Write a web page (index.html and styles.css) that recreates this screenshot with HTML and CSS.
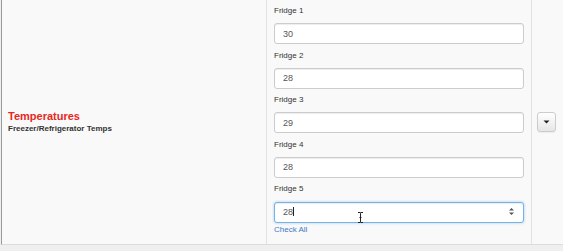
FILE: index.html
```html
<!DOCTYPE html>
<html lang="en">
<head>
  <meta charset="UTF-8">
  <meta name="viewport" content="width=device-width, initial-scale=1.0">
  <title>Temperatures</title>
  <link rel="stylesheet" href="styles.css">
</head>
<body>

<div class="panel">
    <div class="title-col">
        <div>
            <h2 class="title">Temperatures</h2>
            <div class="subtitle">Freezer/Refrigerator Temps</div>
        </div>
    </div>

    <div class="fields-col">
        <label for="fridge1">Fridge 1</label>
        <input type="text" id="fridge1" value="30">

        <label for="fridge2">Fridge 2</label>
        <input type="text" id="fridge2" value="28">

        <label for="fridge3">Fridge 3</label>
        <input type="text" id="fridge3" value="29">

        <label for="fridge4">Fridge 4</label>
        <input type="text" id="fridge4" value="28">

        <label for="fridge5">Fridge 5</label>
        <div class="input-wrap">
            <input type="text" id="fridge5" class="focused" value="28">
            <span class="caret-line"></span>
            <svg class="spinner" width="7" height="9" viewBox="0 0 7 9">
                <path d="M3.5 1 L6 3.6 L1 3.6 Z M3.5 8 L6 5.4 L1 5.4 Z" fill="#555"/>
            </svg>
            <svg class="ibeam" width="7" height="11" viewBox="0 0 7 11">
                <path d="M1 0.5 H3 Q3.5 0.5 3.5 1.5 V9.5 Q3.5 10.5 3 10.5 H1 M6 0.5 H4 Q3.5 0.5 3.5 1.5 M3.5 9.5 Q3.5 10.5 4 10.5 H6 M2.5 5.5 H4.5" stroke="#222" stroke-width="1" fill="none"/>
            </svg>
        </div>
        <a href="#" class="check-all">Check All</a>
    </div>

    <div class="action-col">
        <button type="button" class="menu-btn">
            <svg width="7" height="4" viewBox="0 0 7 4"><path d="M0.5 0.5 H6.5 L3.5 3.5 Z" fill="#222"/></svg>
        </button>
    </div>
</div>

</body>
</html>
```

FILE: styles.css
```css
/* Panel row with three columns */
body {
  margin: 0;
  padding: 0;
  background-color: #efefef;
  font-family: "Liberation Sans", Arial, sans-serif;
  color: #333;
}

.panel {
  display: flex;
  height: 244px;
  margin-left: 1px;
  border-left: 1px solid #9a9a9a;
  border-bottom: 1px solid #dcdcdc;
  background-color: #f9f9f9;
}

.title-col {
  width: 258px;
  padding-left: 6px;
  display: flex;
  align-items: center;
  border-right: 1px solid #e2e2e2;
}

.title {
  margin: 0;
  font-size: 11px;
  line-height: 14px;
  font-weight: bold;
  color: #e8271d;
}

.subtitle {
  font-size: 8px;
  line-height: 12px;
  font-weight: bold;
  color: #333;
}

.fields-col {
  width: 250px;
  padding: 5px 7px 0 7px;
  display: flex;
  flex-direction: column;
  border-right: 1px solid #e2e2e2;
}

label {
  font-size: 8px;
  line-height: 12px;
  color: #333;
  margin-bottom: 6px;
}

input {
  box-sizing: border-box;
  width: 250px;
  height: 21px;
  margin: 0 0 5.5px 0;
  padding: 0 8px;
  font-family: "Liberation Sans", Arial, sans-serif;
  font-size: 9px;
  color: #555;
  background: #fff;
  border: 1px solid #ccc;
  border-radius: 3px;
  box-shadow: inset 0 1px 1px rgba(0, 0, 0, 0.075);
  outline: none;
}

.input-wrap {
  position: relative;
  height: 21px;
}

input.focused {
  margin: 0;
  border-color: #78b1e6;
  box-shadow: inset 0 1px 1px rgba(0, 0, 0, 0.075), 0 0 3px rgba(102, 175, 233, 0.6);
}

.caret-line {
  position: absolute;
  left: 19px;
  top: 6px;
  width: 1px;
  height: 9px;
  background: #222;
}

.spinner {
  position: absolute;
  right: 9px;
  top: 6px;
}

.ibeam {
  position: absolute;
  left: 83px;
  top: 11px;
}

.check-all {
  margin-top: 2px;
  font-size: 8px;
  line-height: 12px;
  color: #3a7bc8;
  text-decoration: none;
}

.action-col {
  flex: 1;
  display: flex;
  align-items: center;
  padding-left: 5px;
}

.menu-btn {
  width: 19px;
  height: 20px;
  padding: 0;
  display: flex;
  align-items: center;
  justify-content: center;
  border: 1px solid #ccc;
  border-radius: 3px;
  background: linear-gradient(#fff, #e6e6e6);
  box-shadow: 0 1px 1px rgba(0, 0, 0, 0.05);
  cursor: pointer;
}
```
